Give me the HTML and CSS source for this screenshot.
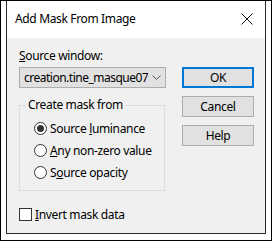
FILE: index.html
```html
<!DOCTYPE html>
<html lang="en">
<head>
  <meta charset="UTF-8" />
  <title>Add Mask From Image</title>
  <link rel="stylesheet" href="styles.css">
</head>
<body>
  <div class="screen">
    <div class="window">
      <div class="titlebar">
        <span class="title">Add Mask From Image</span>
        <svg class="close" width="12" height="12" viewBox="0 0 12 12">
          <path d="M0.5 0.5 L11.5 11.5 M11.5 0.5 L0.5 11.5" stroke="#111" stroke-width="1" fill="none"/>
        </svg>
      </div>

      <div class="content">
        <div class="main">
          <div class="left">
            <div class="label"><u>S</u>ource window:</div>
            <div class="combo">
              <span class="combo-text">creation.tine_masque07·</span>
              <svg class="chevron" width="9" height="5" viewBox="0 0 9 5">
                <path d="M0.5 0.5 L4.5 4.5 L8.5 0.5" stroke="#555" stroke-width="1" fill="none"/>
              </svg>
            </div>

            <div class="group">
              <div class="group-title">Create mask from</div>
              <div class="option"><span class="radio checked"></span><span>Source <u>l</u>uminance</span></div>
              <div class="option"><span class="radio"></span><span><u>A</u>ny non-zero value</span></div>
              <div class="option"><span class="radio"></span><span>S<u>o</u>urce opacity</span></div>
            </div>
          </div>

          <div class="buttons">
            <button class="btn default">OK</button>
            <button class="btn">Cancel</button>
            <button class="btn">Help</button>
          </div>
        </div>

        <div class="check"><span class="box"></span><span><u>I</u>nvert mask data</span></div>
      </div>
    </div>
  </div>
</body>
</html>
```

FILE: styles.css
```css
* {
  box-sizing: border-box;
}

body {
  margin: 0;
  background: #fff;
  font-family: 'Segoe UI', 'Noto Sans', sans-serif;
  font-size: 12px;
  letter-spacing: -0.35px;
  color: #000;
}

u {
  text-decoration: underline;
  text-underline-offset: 1px;
}

.screen {
  width: 272px;
  height: 241px;
  border: 1px solid #000;
  padding-left: 5px;
}

.window {
  width: 260px;
  height: 233px;
  border: 1px solid #2b2b2b;
  border-top: none;
  display: flex;
  flex-direction: column;
}

.titlebar {
  height: 37px;
  background: #fff;
  display: flex;
  align-items: center;
  justify-content: space-between;
  padding: 0 12px 0 8px;
}

.title {
  font-size: 12px;
  padding-bottom: 2px;
}

.close {
  display: block;
  margin-bottom: 1px;
}

.content {
  flex: 1;
  background: #f0f0f0;
  padding: 8px 11px 0 12px;
}

.main {
  display: flex;
  justify-content: space-between;
}

.left {
  width: 147px;
}

.label {
  height: 16px;
  line-height: 16px;
  margin-top: 2px;
}

.combo {
  margin-top: 3px;
  height: 21px;
  background: #e1e1e1;
  border: 1px solid #adadad;
  display: flex;
  align-items: center;
  padding: 0 4px 0 4px;
  overflow: hidden;
}

.combo-text {
  flex: 1;
  min-width: 0;
  white-space: nowrap;
  overflow: hidden;
  letter-spacing: -0.5px;
}

.chevron {
  flex: none;
  margin-left: 4px;
}

.group {
  margin-top: 17px;
  width: 146px;
  height: 86px;
  border: 1px solid #dcdcdc;
  padding-left: 14px;
}

.group-title {
  width: fit-content;
  margin: -9px 0 4px -8px;
  padding: 0 2px;
  line-height: 16px;
  background: #f0f0f0;
}

.option {
  display: flex;
  align-items: center;
  height: 22px;
}

.radio {
  width: 13px;
  height: 13px;
  border: 1px solid #333;
  border-radius: 50%;
  background: #fff;
  margin-right: 3px;
  display: flex;
  align-items: center;
  justify-content: center;
  flex: none;
}

.radio.checked::after {
  content: '';
  width: 7px;
  height: 7px;
  border-radius: 50%;
  background: #333;
}

.buttons {
  width: 72px;
  padding-top: 21px;
  display: flex;
  flex-direction: column;
  gap: 8px;
}

.btn {
  height: 21px;
  background: #e1e1e1;
  border: 1px solid #adadad;
  font-family: inherit;
  font-size: 12px;
  letter-spacing: -0.35px;
  color: #000;
  padding: 0;
}

.btn.default {
  border: 2px solid #0078d7;
}

.check {
  display: flex;
  align-items: center;
  margin-top: 15px;
  height: 16px;
}

.box {
  width: 13px;
  height: 13px;
  border: 1px solid #333;
  background: #fff;
  margin-right: 3px;
}
```
